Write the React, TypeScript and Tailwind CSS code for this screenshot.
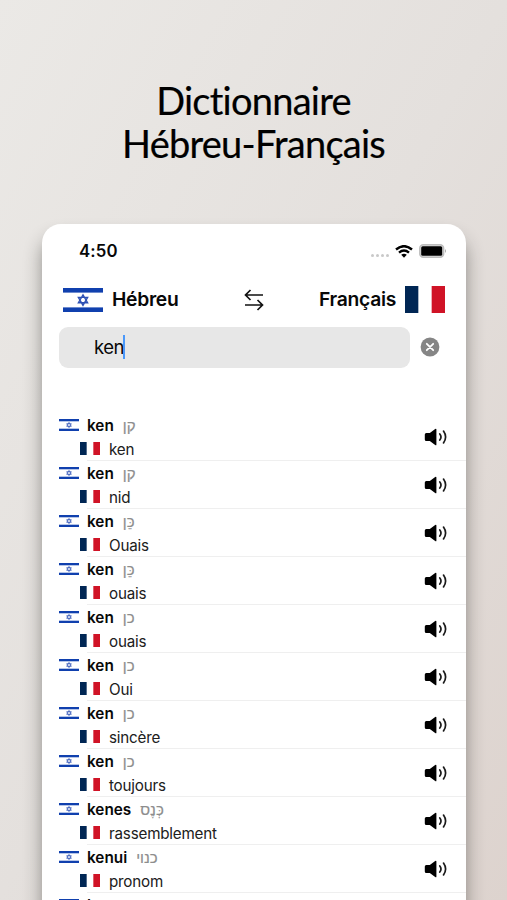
import { useState } from "react";

const initialEntries = [
  { word: "ken", hebrew: "קן", translation: "ken" },
  { word: "ken", hebrew: "קן", translation: "nid" },
  { word: "ken", hebrew: "כֵּן", translation: "Ouais" },
  { word: "ken", hebrew: "כֵּן", translation: "ouais" },
  { word: "ken", hebrew: "כן", translation: "ouais" },
  { word: "ken", hebrew: "כן", translation: "Oui" },
  { word: "ken", hebrew: "כן", translation: "sincère" },
  { word: "ken", hebrew: "כן", translation: "toujours" },
  { word: "kenes", hebrew: "כְּנֶס", translation: "rassemblement" },
  { word: "kenui", hebrew: "כנוי", translation: "pronom" },
  { word: "kenut", hebrew: "", translation: "" },
];

function IsraelFlag({ className }: { className: string }) {
  return (
    <svg viewBox="0 0 40 24" preserveAspectRatio="none" className={className}>
      <rect width="40" height="24" fill="#fff" />
      <rect width="40" height="4.6" fill="#1040ae" />
      <rect y="19.4" width="40" height="4.6" fill="#1040ae" />
      <path d="M20 6.8 24.6 14.7H15.4ZM20 17.3 15.4 9.4H24.6Z" fill="none" stroke="#2d50b4" strokeWidth="1.4" />
    </svg>
  );
}

function FranceFlag({ className }: { className: string }) {
  return (
    <svg viewBox="0 0 3 2" preserveAspectRatio="none" className={className}>
      <rect width="3" height="2" fill="#fff" />
      <rect width="1" height="2" fill="#002654" />
      <rect x="2" width="1" height="2" fill="#d01326" />
    </svg>
  );
}

function SpeakerIcon() {
  return (
    <svg viewBox="0 0 24 18" className="h-[18px] w-6">
      <path d="M2.3 4.9H5.8L11.2.9Q12.4.2 12.4 1.6V16.4Q12.4 17.8 11.2 17.1L5.8 13.1H2.3Q.8 13.1.8 11.6V6.4Q.8 4.9 2.3 4.9Z" />
      <path d="M15.8 5.9Q18.2 9 15.8 12.1M19.5 3.1Q23.7 9 19.5 14.9" fill="none" stroke="#1a1a1a" strokeWidth="1.7" strokeLinecap="round" />
    </svg>
  );
}

function StatusBar() {
  return (
    <div className="flex h-[55px] items-center justify-between pr-[19px] pl-[37.5px]">
      <span className="text-[16.8px] font-semibold tracking-[0.1px]">4:50</span>
      <div className="flex items-center">
        <div className="mt-[8px] mr-[6px] flex gap-[2px]">
          <i className="size-[3px] rounded-full bg-[#c9c9c9]" />
          <i className="size-[3px] rounded-full bg-[#c9c9c9]" />
          <i className="size-[3px] rounded-full bg-[#c9c9c9]" />
          <i className="size-[3px] rounded-full bg-[#c9c9c9]" />
        </div>
        <svg viewBox="0 0 18 13" className="mb-px mr-[6px] h-[13px] w-[18px]" fill="none" stroke="#000" strokeWidth="2.4">
          <path d="M1 4.5Q9-2.2 17 4.5M4 7.7Q9 3.5 14 7.7" />
          <path d="M6.2 9.8Q9 7.7 11.8 9.8L9 12.8Z" fill="#000" stroke="none" />
        </svg>
        <svg viewBox="0 0 28 14" className="mb-px h-[14px] w-7">
          <rect x=".8" y=".8" width="23.8" height="12.4" rx="3.5" fill="#ddd" stroke="#bdbdbd" strokeWidth="1.5" />
          <rect x="2.2" y="2.2" width="21" height="9.6" rx="1.5" />
          <path d="M26 5Q28 7 26 9Z" fill="#aaa" />
        </svg>
      </div>
    </div>
  );
}

export default function App() {
  const [query, setQuery] = useState("ken");

  return (
    <main className="flex h-[900px] w-[507px] flex-col overflow-hidden bg-linear-to-br from-[#ebe9e6] via-[#e4e0dd] to-[#ddd3ce] font-['Inter','Liberation_Sans',sans-serif] text-[#080808]">
      <h1 className="h-[224px] shrink-0 pt-[79px] text-center font-['Lato',sans-serif] text-[38px] leading-[43px] font-normal text-black">
        <span className="block tracking-[-0.75px] [-webkit-text-stroke:0.2px_black]">Dictionnaire</span>
        <span className="block tracking-[-0.75px] [-webkit-text-stroke:0.2px_black]">Hébreu-Français</span>
      </h1>

      <section className="ml-[41.5px] h-[720px] w-[424.5px] shrink-0 overflow-hidden rounded-[19px] bg-white shadow-[0_14px_18px_rgba(40,40,35,0.45)]">
        <StatusBar />

        {/* Languages */}
        <div className="flex h-[41px] items-center pr-[21px] pl-[21.5px] text-[19.3px] font-semibold tracking-[-0.3px]">
          <IsraelFlag className="h-6 w-10" />
          <span className="ml-[9px]">Hébreu</span>
          <svg viewBox="0 0 20 22" className="ml-[66px] h-[22px] w-5" fill="none" stroke="#111" strokeWidth="1.7">
            <path d="M19 6H1.5M6.5 1 1.5 6 6.5 11M1 16H18.5M13.5 11 18.5 16 13.5 21" />
          </svg>
          <span className="ml-auto">Français</span>
          <FranceFlag className="ml-[9px] h-[27px] w-10" />
        </div>

        {/* Search */}
        <div className="mt-[6.5px] flex h-[41px] items-center pl-[17.5px]">
          <div className="flex h-[41px] w-[351px] items-center rounded-[9px] bg-[#e7e7e7] pl-[35px]">
            <span className="pt-px text-[18.5px] tracking-[-0.5px]">{query}</span>
            <span className="-ml-px h-6 w-[2px] bg-[#4b98fa]" />
          </div>
          <button className="mb-px ml-[9.5px]" aria-label="Effacer" onClick={() => setQuery("")}>
            <svg viewBox="0 0 20 20" className="size-[20px]">
              <circle cx="10" cy="10" r="9.4" fill="#858585" />
              <path d="m6.8 6.8 6.4 6.4m0-6.4-6.4 6.4" stroke="#fff" strokeWidth="1.8" strokeLinecap="round" />
            </svg>
          </button>
        </div>

        {/* Results */}
        <ul className="mt-[45.5px]">
          {initialEntries.map((entry, index) => (
            <li key={index} className="flex h-12 pl-[17px]">
              <IsraelFlag className="mt-[6px] h-3 w-5 shrink-0" />
              <div className="ml-[8.5px] flex flex-1 border-b border-[#efefef]">
                <div className="flex-1">
                  <div className="flex h-6 items-center pt-[2px] text-[15.3px]">
                    <span className="font-semibold">{entry.word}</span>
                    <span dir="rtl" className="ml-[9px] font-['Liberation_Sans',sans-serif] text-[15px] text-[#8d8d8d] [-webkit-text-stroke:0.2px_#8d8d8d]">
                      {entry.hebrew}
                    </span>
                  </div>
                  {entry.translation && (
                    <div className="-ml-[7px] flex h-6 items-center text-[15.2px] tracking-[-0.2px] text-[#202020]">
                      <FranceFlag className="mb-px h-[13px] w-5" />
                      <span className="ml-[9px] pt-[2px]">{entry.translation}</span>
                    </div>
                  )}
                </div>
                <button className="mr-[18.5px]" aria-label="Écouter">
                  <SpeakerIcon />
                </button>
              </div>
            </li>
          ))}
        </ul>
      </section>
    </main>
  );
}
